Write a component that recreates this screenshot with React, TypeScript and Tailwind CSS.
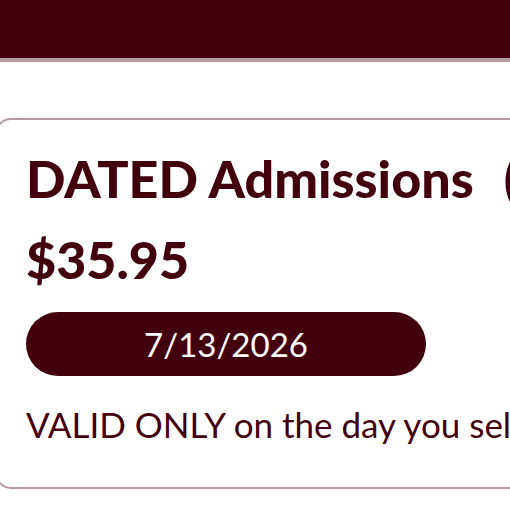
export default function App() {
  return (
    <main className="min-h-screen w-[510px] overflow-hidden bg-white text-[#42000f] font-['Lato',sans-serif]">
      <header className="h-[62px] bg-[#42000f] border-b-4 border-[#b39a9f]" />
      <div className="pt-[56px] -ml-[5px]">
        <section className="w-[800px] rounded-2xl border-2 border-[#b39a9f] pl-[29px] pt-[28px] pb-[43px]">
          <h1 className="text-[52px] leading-[60px] font-black whitespace-nowrap">
            DATED Admissions<span className="ml-[30px]">(Ages 13+)</span>
          </h1>
          <div className="mt-[21px] text-[52px] leading-[60px] font-black">$35.95</div>
          <button className="mt-[23px] block w-[400px] h-[64px] rounded-full bg-[#42000f] text-white text-[33px] leading-[64px]">
            7/13/2026
          </button>
          <p className="mt-[28px] text-[35px] leading-[40px] whitespace-nowrap">
            VALID ONLY on the day you select.
          </p>
        </section>
      </div>
    </main>
  );
}
